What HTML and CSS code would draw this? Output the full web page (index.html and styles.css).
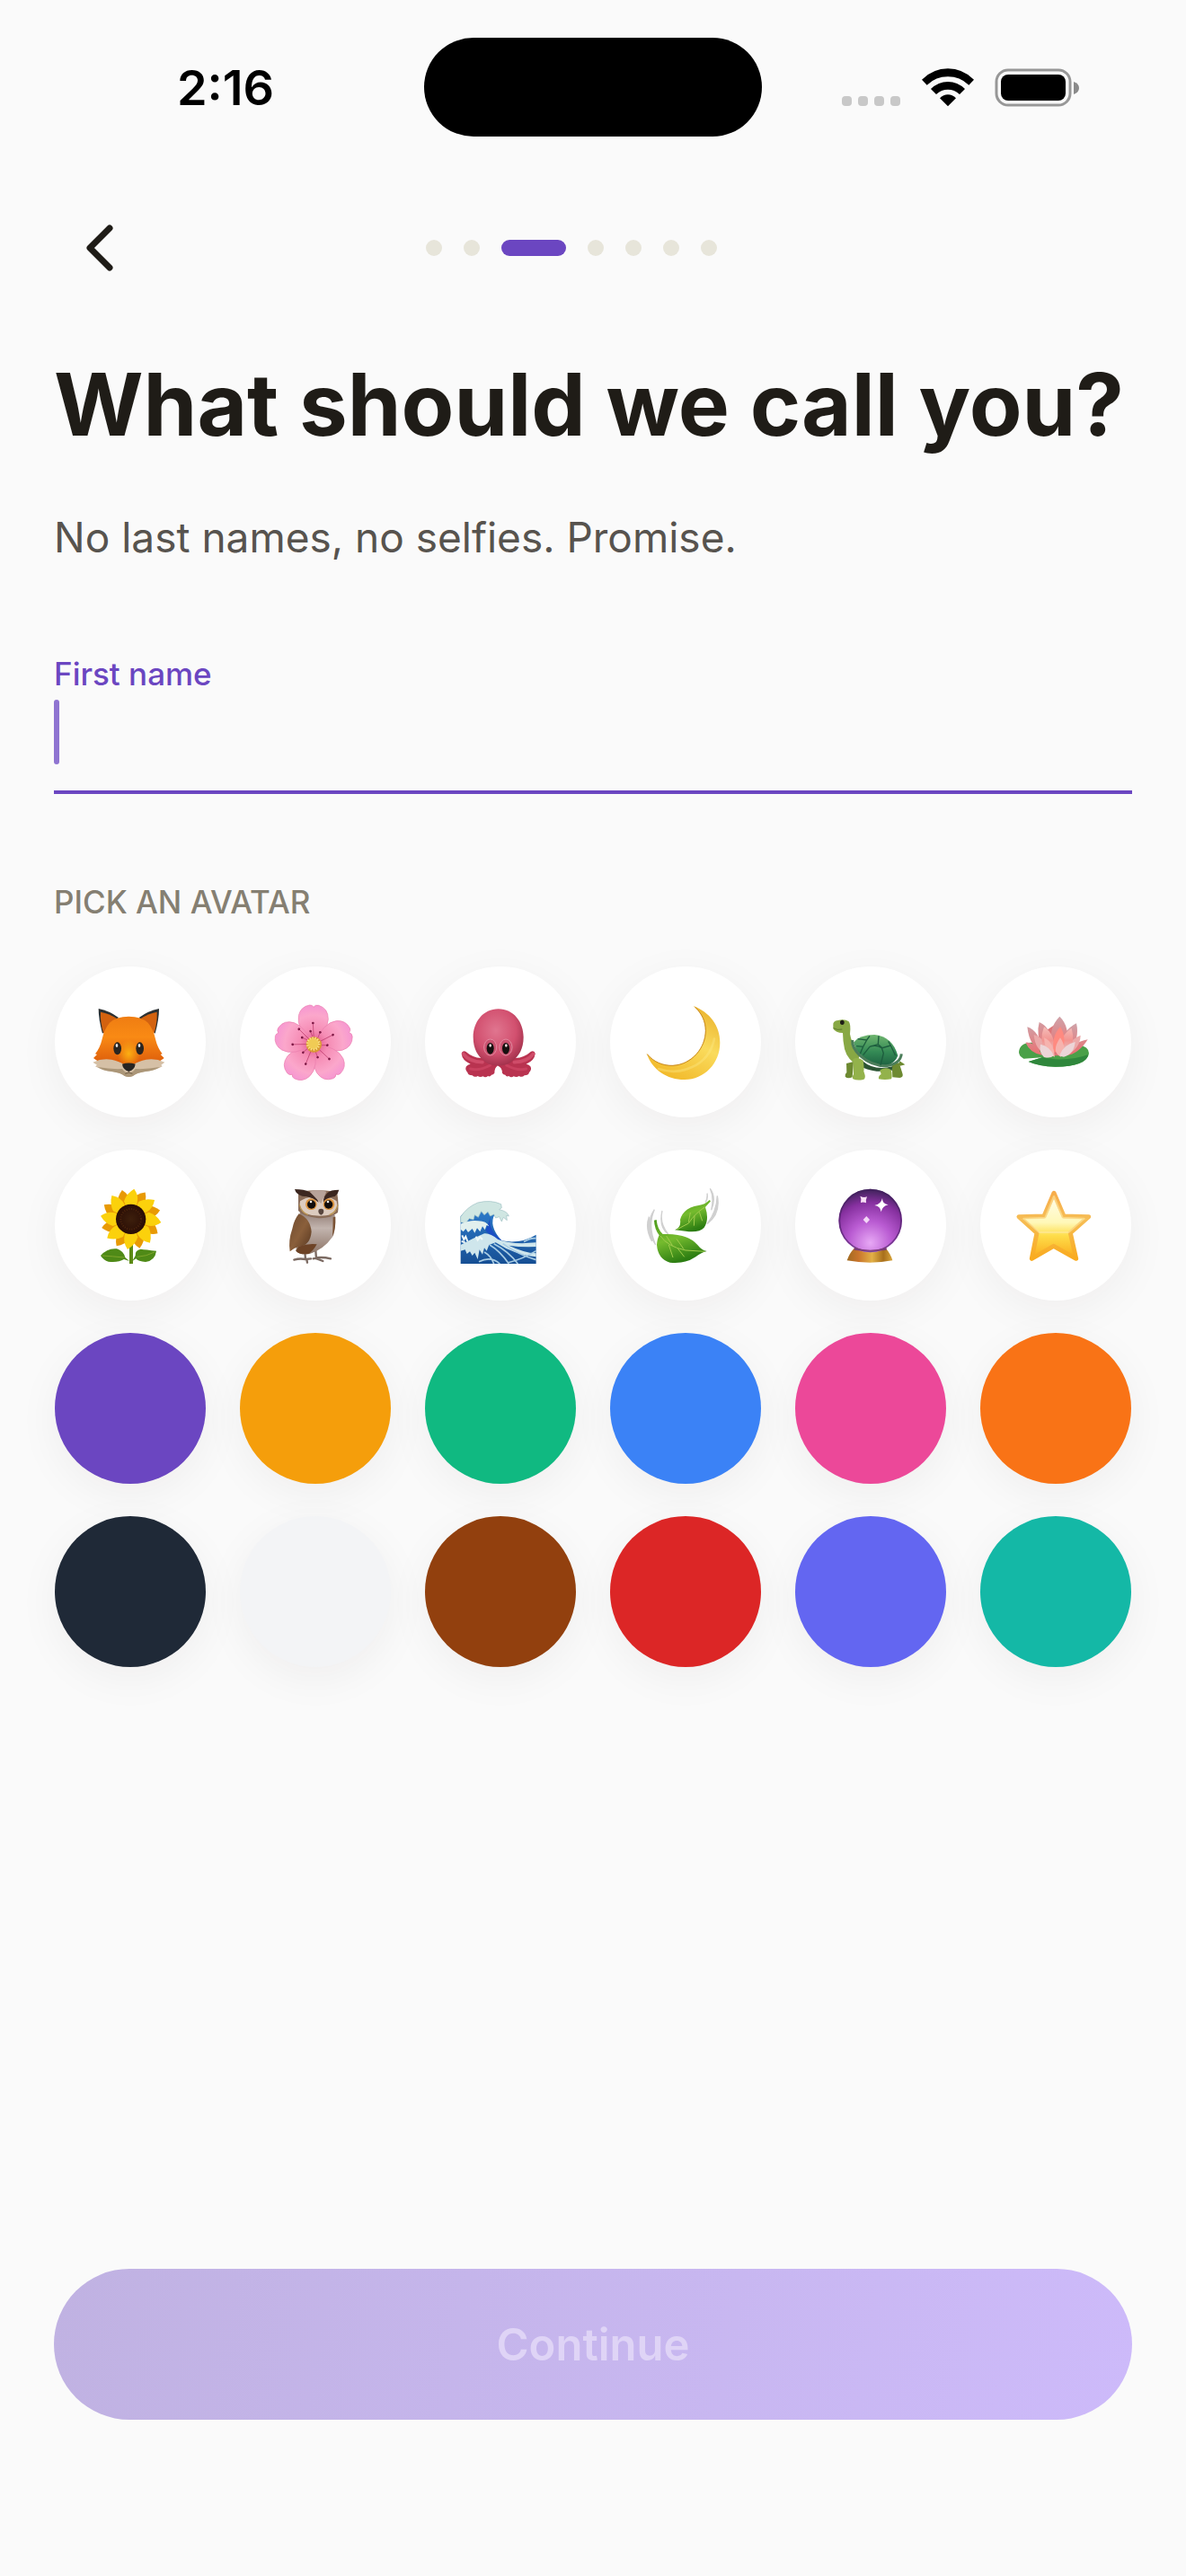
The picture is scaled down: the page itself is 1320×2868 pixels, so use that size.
FILE: index.html
```html
<!DOCTYPE html>
<html lang="en">
<head>
    <meta charset="UTF-8">
    <meta name="viewport" content="width=device-width, initial-scale=1.0">
    <title>What should we call you?</title>
    <link rel="stylesheet" href="styles.css">
</head>
<body>

<!-- Status bar -->
<div class="status-bar">
    <div class="time">2:16</div>
    <div class="island"></div>
    <div class="status-icons">
        <svg class="signal" viewBox="0 0 66 43">
            <rect x="0" y="31" width="11" height="11" rx="4"/>
            <rect x="18" y="31" width="11" height="11" rx="4"/>
            <rect x="36" y="31" width="11" height="11" rx="4"/>
            <rect x="54" y="31" width="11" height="11" rx="4"/>
        </svg>
        <svg class="wifi" viewBox="374 74 174 129">
            <path d="M374 112Q412 75 461 75Q510 75 548 112L531 130Q501 102 461 102Q421 102 391 130Z"/>
            <path d="M404 143Q429 119 461 119Q493 119 518 143L500 161Q483 145 461 145Q439 145 422 161Z"/>
            <path d="M434 174Q446 162 461 162Q476 162 488 174L461 201Z"/>
        </svg>
        <svg class="battery" viewBox="0 0 94 43">
            <rect x="2" y="2" width="82" height="39" rx="13" fill="none" stroke="#979797" stroke-width="3"/>
            <rect x="7" y="7" width="72" height="29" rx="8"/>
            <path d="M88 15Q94 17 94 22Q94 27 88 29Z" fill="#8a8a8a"/>
        </svg>
    </div>
</div>

<!-- Back button and progress dots -->
<header class="top-nav">
    <button type="button" class="back" aria-label="Back">
        <svg viewBox="0 0 32 52"><path d="M27 4L5 26L27 48"/></svg>
    </button>
    <div class="dots">
        <span class="dot"></span>
        <span class="dot"></span>
        <span class="dot active"></span>
        <span class="dot"></span>
        <span class="dot"></span>
        <span class="dot"></span>
        <span class="dot"></span>
    </div>
</header>

<main>
    <h1>What should we call you?</h1>
    <p class="subtitle">No last names, no selfies. Promise.</p>

    <div class="field">
        <label for="firstName">First name</label>
        <div class="input-row">
            <span class="caret"></span>
            <input type="text" id="firstName" autocomplete="off">
        </div>
    </div>

    <h2>PICK AN AVATAR</h2>
    <div class="avatars">
        <button type="button" class="avatar" aria-label="Fox">
            <svg viewBox="33 54 504 504">
                <defs>
                    <linearGradient id="foxFace" x1="0" y1="0" x2="0" y2="1">
                        <stop offset="0" stop-color="#ef7d12"/>
                        <stop offset="0.4" stop-color="#f98a14"/>
                        <stop offset="1" stop-color="#d9560a"/>
                    </linearGradient>
                    <radialGradient id="foxNose">
                        <stop offset="0" stop-color="#fcae12"/>
                        <stop offset="1" stop-color="#fcae12" stop-opacity="0"/>
                    </radialGradient>
                </defs>
                <path d="M179 195Q215 202 246 225L192 278Q179 230 179 195Z" fill="#2b3032"/>
                <path d="M381 195Q345 202 314 225L368 278Q381 230 381 195Z" fill="#2b3032"/>
                <path d="M186 206Q216 212 240 228L196 278Q184 240 186 206Z" fill="#d3620f"/>
                <path d="M374 206Q344 212 320 228L364 278Q376 240 374 206Z" fill="#d3620f"/>
                <path d="M280 221Q238 221 216 242Q198 262 190 300Q184 326 168 346L174 348L162 360Q200 392 280 392Q360 392 398 360L386 348L392 346Q376 326 370 300Q362 262 344 242Q322 221 280 221Z" fill="url(#foxFace)"/>
                <ellipse cx="280" cy="345" rx="38" ry="46" fill="url(#foxNose)"/>
                <path d="M160 374Q190 360 222 365Q248 371 262 380L298 380Q312 371 338 365Q370 360 400 374L388 383L392 388Q368 402 338 404Q304 410 294 420Q280 426 266 420Q256 410 222 404Q192 402 168 388L174 383Z" fill="#d5c0a6"/>
                <path d="M176 390Q222 398 258 396Q268 410 280 410Q292 410 302 396Q338 398 384 390Q362 404 336 405Q304 410 294 420Q280 426 266 420Q256 410 222 405Q196 403 176 390Z" fill="#ab9678"/>
                <ellipse cx="242" cy="328" rx="13" ry="21" fill="#2a2520"/>
                <ellipse cx="317" cy="328" rx="13" ry="21" fill="#2a2520"/>
                <ellipse cx="240" cy="318" rx="4" ry="6" fill="#e8e8e8"/>
                <ellipse cx="315" cy="318" rx="4" ry="6" fill="#e8e8e8"/>
                <path d="M258 380Q280 373 302 380Q300 398 280 405Q260 398 258 380Z" fill="#272422"/>
                <path d="M280 404V410M268 412Q280 404 292 412" fill="none" stroke="#6f5b43" stroke-width="3"/>
            </svg>
        </button>
        <button type="button" class="avatar" aria-label="Cherry blossom">
            <svg viewBox="651 54 504 504">
                <defs>
                    <radialGradient id="petal" gradientUnits="userSpaceOnUse" cx="898" cy="314" r="130">
                        <stop offset="0" stop-color="#dd4f86"/>
                        <stop offset="0.35" stop-color="#f58cb4"/>
                        <stop offset="0.75" stop-color="#fba7cb"/>
                        <stop offset="1" stop-color="#f697d2"/>
                    </radialGradient>
                    <path id="petalShape" d="M898 314Q838 262 847 218Q854 188 884 183Q893 182 897 190Q903 181 914 184Q946 194 946 230Q944 266 898 314Z"/>
                    <g id="stamen">
                        <path d="M898 300L895 243M908 300L919 274" stroke="#b83768" stroke-width="2"/>
                        <circle cx="895" cy="243" r="4" fill="#7b1743"/>
                        <circle cx="919" cy="274" r="4" fill="#7b1743"/>
                    </g>
                </defs>
                <g fill="url(#petal)" stroke="#ea7fae" stroke-width="2">
                    <use href="#petalShape"/>
                    <use href="#petalShape" transform="rotate(72 898 314)"/>
                    <use href="#petalShape" transform="rotate(144 898 314)"/>
                    <use href="#petalShape" transform="rotate(216 898 314)"/>
                    <use href="#petalShape" transform="rotate(288 898 314)"/>
                </g>
                <use href="#stamen"/>
                <use href="#stamen" transform="rotate(66 898 314)"/>
                <use href="#stamen" transform="rotate(136 898 314)"/>
                <use href="#stamen" transform="rotate(205 898 314)"/>
                <use href="#stamen" transform="rotate(272 898 314)"/>
                <use href="#stamen" transform="rotate(318 898 314)"/>
                <circle cx="898" cy="315" r="26" fill="#d99a34"/>
                <circle cx="896" cy="312" r="19" fill="#f0cb55"/>
                <circle cx="896" cy="312" r="20" fill="none" stroke="#fae38a" stroke-width="7" stroke-dasharray="4 5"/>
            </svg>
        </button>
        <button type="button" class="avatar" aria-label="Octopus">
            <svg viewBox="70 54 504 504">
                <defs>
                    <radialGradient id="octoHead" cx="0.45" cy="0.38" r="0.62">
                        <stop offset="0" stop-color="#e0758f"/>
                        <stop offset="0.65" stop-color="#d2506f"/>
                        <stop offset="1" stop-color="#a5334e"/>
                    </radialGradient>
                </defs>
                <path d="M192 345Q194 334 206 338Q228 358 258 360L300 372L312 386Q302 392 302 410Q298 416 292 416Q288 424 280 420Q272 427 264 421Q254 426 246 420Q236 426 228 418Q214 418 212 408Q202 398 208 388Q214 380 222 380Q194 368 192 345Z" fill="#b93350"/>
                <path d="M438 345Q436 334 424 338Q402 358 372 360L330 372L314 386Q328 392 328 410Q332 416 338 416Q342 424 350 420Q358 427 366 421Q376 426 384 420Q394 426 402 418Q416 418 418 408Q428 398 422 388Q416 380 408 380Q436 368 438 345Z" fill="#b93350"/>
                <path d="M198 346Q218 372 262 374M432 346Q412 372 368 374" fill="none" stroke="#cf4c69" stroke-width="11" stroke-linecap="round"/>
                <path d="M222 396Q250 404 288 384M408 396Q380 404 342 384" fill="none" stroke="#c9415f" stroke-width="9" stroke-linecap="round"/>
                <path d="M315 196C366 196 399 240 399 290C399 330 382 354 366 366Q352 384 315 386Q278 384 264 366C248 354 231 330 231 290C231 240 264 196 315 196Z" fill="url(#octoHead)"/>
                <ellipse cx="288" cy="324" rx="21" ry="27" fill="#c9526f" stroke="#e38aa0" stroke-width="3"/>
                <ellipse cx="340" cy="324" rx="21" ry="27" fill="#c9526f" stroke="#e38aa0" stroke-width="3"/>
                <ellipse cx="288" cy="328" rx="12" ry="19" fill="#16100f"/>
                <ellipse cx="340" cy="328" rx="12" ry="19" fill="#16100f"/>
                <ellipse cx="288" cy="318" rx="4" ry="5" fill="#f1dfe2"/>
                <ellipse cx="341" cy="318" rx="4" ry="5" fill="#f1dfe2"/>
            </svg>
        </button>
        <button type="button" class="avatar" aria-label="Crescent moon">
            <svg viewBox="688 54 504 504">
                <defs>
                    <linearGradient id="moon" x1="0.9" y1="0" x2="0.4" y2="1">
                        <stop offset="0" stop-color="#e9b02a"/>
                        <stop offset="0.5" stop-color="#fadb5c"/>
                        <stop offset="1" stop-color="#f2bb2d"/>
                    </linearGradient>
                </defs>
                <path d="M966 186C1020 206 1055 252 1055 308C1055 378 1002 432 936 432C878 432 828 398 810 344C832 372 864 385 898 384C962 380 1006 326 1006 268C1006 236 992 208 966 186Z" fill="url(#moon)"/>
                <path d="M812 347C834 374 866 386 898 385C962 381 1007 326 1007 268C1007 238 995 212 972 190" fill="none" stroke="#c98a23" stroke-width="3"/>
                <path d="M850 396C920 420 1016 390 1036 296" fill="none" stroke="#fde885" stroke-width="8" stroke-linecap="round" opacity="0.4"/>
            </svg>
        </button>
        <button type="button" class="avatar" aria-label="Turtle">
            <svg viewBox="75 54 504 504">
                <defs>
                    <linearGradient id="shell" x1="0" y1="0" x2="0" y2="1">
                        <stop offset="0" stop-color="#6fb56f"/>
                        <stop offset="0.55" stop-color="#348a55"/>
                        <stop offset="1" stop-color="#1d6141"/>
                    </linearGradient>
                </defs>
                <path d="M246 378L270 372L266 424Q250 430 242 422Q240 414 247 408ZM398 380L422 376L434 414Q436 424 424 426L400 424ZM424 370L442 382L420 388Z" fill="#6d8a31"/>
                <path d="M202 250Q200 236 218 234Q240 228 254 238Q262 248 258 280Q262 310 290 344L284 384Q250 366 240 330Q234 300 234 276Q210 276 202 262Z" fill="#88a844"/>
                <path d="M203 260Q215 268 232 264" fill="none" stroke="#5d7a2c" stroke-width="3"/>
                <ellipse cx="232" cy="241" rx="7" ry="8" fill="#1d1d16"/>
                <path d="M300 370Q340 404 400 388L398 402Q340 410 302 392Z" fill="#2c5434"/>
                <path d="M268 364Q286 354 302 368Q306 392 304 404Q314 430 302 432Q282 436 268 430Q264 424 270 414Z" fill="#93b24b"/>
                <path d="M358 400Q380 388 396 400Q400 424 396 430Q374 434 354 430Q352 420 362 414Z" fill="#93b24b"/>
                <path d="M270 308Q290 282 340 282Q400 288 418 352Q410 376 380 386Q320 388 278 330Z" fill="url(#shell)"/>
                <path d="M266 300Q264 326 292 352Q330 386 378 386Q426 380 430 346" fill="none" stroke="#4b7d5a" stroke-width="9"/>
                <path d="M284 296L314 300L324 286M314 300L302 322L280 320M302 322L292 346M324 322Q345 314 364 326L370 344L360 384M324 322L302 350M354 286L352 314L366 326L394 318M352 314L324 322M394 318L386 304M394 318L410 352" fill="none" stroke="#1d5d3e" stroke-width="4"/>
            </svg>
        </button>
        <button type="button" class="avatar" aria-label="Lotus">
            <svg viewBox="693 54 504 504">
                <defs>
                    <linearGradient id="lotusBack" x1="0" y1="0" x2="0" y2="1">
                        <stop offset="0" stop-color="#cfa3a9"/>
                        <stop offset="1" stop-color="#ea6f70"/>
                    </linearGradient>
                    <linearGradient id="lotusFront" x1="0" y1="0" x2="0" y2="1">
                        <stop offset="0" stop-color="#f5bdb9"/>
                        <stop offset="0.5" stop-color="#f29490"/>
                        <stop offset="1" stop-color="#e6c6c8"/>
                    </linearGradient>
                </defs>
                <path d="M822 340Q824 310 862 308L1020 316Q1056 322 1056 344Q1050 388 944 389Q888 388 854 372L900 358L838 362Q822 354 822 340Z" fill="#4aa048"/>
                <path d="M854 372L900 358L944 364Q1010 366 1054 348Q1046 388 944 389Q888 388 854 372Z" fill="#2f873c"/>
                <path d="M886 330L910 270L940 250L980 262L1000 330L960 352H920Z" fill="#dd7678"/>
                <path d="M850 256Q890 268 904 340Q858 326 850 256ZM844 308Q876 304 900 350Q860 344 844 308ZM1014 244Q1026 296 990 338L956 330Q966 268 1014 244ZM1052 298Q1022 346 980 352Q1000 308 1052 298Z" fill="url(#lotusBack)"/>
                <path d="M890 240Q930 256 938 330L902 340Q878 280 890 240ZM958 221Q996 258 978 320H934Q918 262 958 221Z" fill="url(#lotusBack)"/>
                <path d="M1028 284Q1026 332 978 350Q980 304 1028 284ZM872 282Q914 294 922 350Q876 338 872 282Z" fill="#eba9a9"/>
                <path d="M906 256Q944 280 942 340L912 346Q888 300 906 256ZM998 260Q1012 308 984 346L956 336Q960 284 998 260Z" fill="url(#lotusFront)"/>
                <path d="M960 256Q982 286 968 340H938Q930 288 960 256Z" fill="#ff8a80"/>
                <path d="M906 292Q936 304 942 356Q910 348 906 292ZM960 292Q986 330 962 356Q928 340 960 292Z" fill="#f6b3ae"/>
                <path d="M894 314Q928 322 938 352Q928 362 906 357Q888 340 894 314ZM1010 306Q1006 348 972 356Q960 354 958 350Q970 316 1010 306Z" fill="#ecd5d7"/>
            </svg>
        </button>

        <button type="button" class="avatar" aria-label="Sunflower">
            <svg viewBox="33 666 504 504">
                <defs>
                    <radialGradient id="seeds">
                        <stop offset="0" stop-color="#3d1f0c"/>
                        <stop offset="1" stop-color="#2a0d05"/>
                    </radialGradient>
                    <g id="rays">
                        <path id="ray" d="M287 898L264 838Q272 812 298 797Q314 820 308 844Z"/>
                        <use href="#ray" transform="rotate(45 287 898)"/>
                        <use href="#ray" transform="rotate(90 287 898)"/>
                        <use href="#ray" transform="rotate(135 287 898)"/>
                        <use href="#ray" transform="rotate(180 287 898)"/>
                        <use href="#ray" transform="rotate(225 287 898)"/>
                        <use href="#ray" transform="rotate(270 287 898)"/>
                        <use href="#ray" transform="rotate(315 287 898)"/>
                    </g>
                </defs>
                <path d="M282 980H294V1047H282Z" fill="#5c8a14"/>
                <path d="M186 1020Q208 994 240 997Q262 1004 268 1026L282 1038L264 1032Q244 1044 212 1040Q196 1036 186 1020ZM372 1004Q368 1036 336 1041Q312 1040 304 1030L292 1038L302 1020Q300 1002 320 998Q336 1000 372 1004Z" fill="#4f8a17"/>
                <path d="M192 1020Q224 1022 264 1026M308 1024Q340 1022 366 1008" fill="none" stroke="#7fa62c" stroke-width="3"/>
                <use href="#rays" fill="#e89a05" transform="rotate(22 287 898)"/>
                <use href="#rays" fill="#fbd10c"/>
                <circle cx="287" cy="898" r="50" fill="url(#seeds)"/>
                <circle cx="287" cy="898" r="34" fill="none" stroke="#4d260e" stroke-width="6" stroke-dasharray="3 5"/>
            </svg>
        </button>
        <button type="button" class="avatar" aria-label="Owl">
            <svg viewBox="651 666 504 504">
                <defs>
                    <linearGradient id="owlBelly" x1="0" y1="0" x2="0" y2="1">
                        <stop offset="0" stop-color="#8d7870"/>
                        <stop offset="0.4" stop-color="#c2b4ae"/>
                        <stop offset="1" stop-color="#8c7466"/>
                    </linearGradient>
                    <linearGradient id="owlWing" x1="0" y1="0" x2="1" y2="1">
                        <stop offset="0" stop-color="#6f4b30"/>
                        <stop offset="0.5" stop-color="#8a5f3b"/>
                        <stop offset="1" stop-color="#54351f"/>
                    </linearGradient>
                </defs>
                <path d="M868 1008L870 1032M904 1004L906 1030M832 1034Q850 1028 870 1032L888 1030M874 1032L876 1043M896 1030Q920 1022 954 1030M908 1030L928 1038" fill="none" stroke="#7b6a62" stroke-width="7" stroke-linecap="round"/>
                <path d="M852 870Q908 900 968 884Q972 940 960 958Q930 1000 884 1014Q850 1018 838 1004Z" fill="url(#owlBelly)"/>
                <path d="M848 880Q886 896 890 940Q886 988 846 990Q828 996 818 1006Q812 970 826 930Q832 900 848 880Z" fill="url(#owlWing)"/>
                <path d="M846 990Q880 978 908 982Q896 1004 880 1014Q850 1018 838 1004Z" fill="#6d4326"/>
                <path d="M970 890Q972 930 960 956Q962 920 962 892Z" fill="#7a5234"/>
                <path d="M846 812Q870 800 910 802Q950 800 976 812Q982 850 978 876Q950 898 908 894Q862 888 846 870Z" fill="#8a6c58"/>
                <path d="M852 838Q880 818 912 828Q950 818 974 838Q982 866 960 882Q910 894 866 878Q846 862 852 838Z" fill="#dccbbf"/>
                <path d="M850 850Q856 874 878 884M978 850Q972 876 950 884" fill="none" stroke="#ba9450" stroke-width="4"/>
                <path d="M834 798Q866 798 884 808Q906 818 914 842Q894 826 872 822Q852 824 838 808ZM982 800Q952 800 944 810Q928 824 930 842Q944 824 968 822Q980 812 982 800Z" fill="#3c2720"/>
                <path d="M884 806Q910 798 940 806L922 846Z" fill="#b8a399"/>
                <circle cx="889" cy="848" r="19" fill="#dc9440"/>
                <circle cx="948" cy="848" r="19" fill="#dc9440"/>
                <circle cx="890" cy="849" r="14" fill="#120d0c"/>
                <circle cx="947" cy="849" r="14" fill="#120d0c"/>
                <circle cx="888" cy="840" r="4" fill="#fff"/>
                <circle cx="945" cy="840" r="4" fill="#fff"/>
                <path d="M914 866Q922 860 930 866Q934 878 922 884Q910 878 914 866Z" fill="#57453e"/>
            </svg>
        </button>
        <button type="button" class="avatar" aria-label="Wave">
            <svg viewBox="70 666 504 504">
                <defs>
                    <linearGradient id="sea" x1="0" y1="0" x2="0" y2="1">
                        <stop offset="0" stop-color="#2f7fd0"/>
                        <stop offset="1" stop-color="#164f94"/>
                    </linearGradient>
                </defs>
                <path d="M189 888Q230 840 290 850L304 880Q280 920 326 970Q390 982 441 950V1047H189Z" fill="url(#sea)"/>
                <path d="M290 890Q276 930 330 972Q300 970 272 936Z" fill="#1b4fc4"/>
                <path d="M189 890Q210 858 246 843Q290 832 324 848L326 860L318 866Q346 872 350 888L342 886L344 902L332 892L326 906L318 890L306 894L300 882L288 888L280 874L268 884L258 872L248 892L236 884L232 900L218 896L206 912L189 908Z" fill="#cfe6e2" stroke="#9dc0c2" stroke-width="2"/>
                <path d="M189 914Q220 900 248 904Q276 904 284 922L276 918L270 934L262 922L254 940L244 928L236 944L228 930L214 942L206 930L198 940L189 932Z" fill="#e2f0ee"/>
                <path d="M189 984Q230 962 268 946Q288 944 314 966Q360 984 441 976V990Q390 992 350 986Q400 1010 441 1012V1024Q370 1018 306 976L284 984L276 1004L268 994L262 1016L252 1000L246 1032L236 1010L228 1020L220 1006L210 1014L204 1000L189 1004Z" fill="#cfe6ec"/>
                <path d="M240 956L246 968L254 958L262 966M194 952L200 966L206 956L212 972M192 972L204 976" fill="none" stroke="#f0f8f8" stroke-width="6"/>
                <path d="M286 984Q320 1004 350 1047M300 980Q350 1006 380 1047M268 1008Q290 1020 300 1047M330 980Q380 1016 441 1034M346 1044Q400 1030 441 1004M250 1040Q290 1020 320 1047M400 974Q420 960 441 962" fill="none" stroke="#a9cde4" stroke-width="5"/>
            </svg>
        </button>
        <button type="button" class="avatar" aria-label="Leaves">
            <svg viewBox="688 666 504 504">
                <defs>
                    <linearGradient id="leaf" x1="0" y1="0" x2="0.4" y2="1">
                        <stop offset="0" stop-color="#4c9a1c"/>
                        <stop offset="0.5" stop-color="#75bb2e"/>
                        <stop offset="1" stop-color="#2c7d12"/>
                    </linearGradient>
                </defs>
                <path d="M1022 796Q1044 826 1026 868Q1036 826 1022 796ZM1046 820Q1058 880 1012 914Q1044 874 1046 820ZM1012 812Q1014 830 1006 842Q1016 830 1012 812ZM836 866Q800 920 840 984Q812 920 836 866ZM862 870Q852 912 882 948Q850 926 862 870ZM818 890Q804 930 828 972Q814 930 818 890Z" fill="#d0d0d0" stroke="#d0d0d0" stroke-width="4"/>
                <path d="M904 934Q926 926 922 900Q932 860 984 852Q1004 850 1020 834L1024 838L1006 858Q1020 900 1002 926Q986 944 940 938Z" fill="url(#leaf)"/>
                <path d="M835 902L843 900Q846 932 864 948Q946 944 980 984Q994 1002 1011 1005Q990 1010 974 1024Q940 1048 888 1043Q848 1032 844 984Q846 962 852 952Q836 930 835 902Z" fill="url(#leaf)"/>
                <path d="M1004 858Q970 880 950 912L912 932M970 886L968 920M986 874L996 904M956 876L950 908M856 954Q880 990 940 1002L1004 1006M884 984L898 1026M914 996L936 1024M876 954L896 986M910 964L934 998" fill="none" stroke="#a1cc4e" stroke-width="3"/>
            </svg>
        </button>
        <button type="button" class="avatar" aria-label="Crystal ball">
            <svg viewBox="75 666 504 504">
                <defs>
                    <radialGradient id="orb" cx="0.5" cy="0.85" r="0.85">
                        <stop offset="0" stop-color="#e7a8f5"/>
                        <stop offset="0.4" stop-color="#b95bd2"/>
                        <stop offset="0.75" stop-color="#86309f"/>
                        <stop offset="1" stop-color="#3d2258"/>
                    </radialGradient>
                    <linearGradient id="stand">
                        <stop offset="0" stop-color="#a06a20"/>
                        <stop offset="0.25" stop-color="#c9742c"/>
                        <stop offset="0.55" stop-color="#e2b047"/>
                        <stop offset="0.8" stop-color="#a86f1c"/>
                        <stop offset="1" stop-color="#d8a53a"/>
                    </linearGradient>
                </defs>
                <path d="M272 996H378Q394 1014 400 1036Q326 1050 248 1036Q256 1012 272 996Z" fill="url(#stand)"/>
                <circle cx="326" cy="903" r="106" fill="url(#orb)"/>
                <circle cx="326" cy="903" r="103" fill="none" stroke="#43205f" stroke-width="5" opacity="0.6"/>
                <path d="M272 992Q326 1010 380 992V1001Q326 1008 272 1001Z" fill="#7a3b78"/>
                <path d="M366 828Q366 848 386 850Q366 854 362 874Q360 854 340 852Q362 848 366 828Z" fill="#fff"/>
                <path d="M292 821Q304 828 315 823Q310 834 312 844Q302 840 294 843Q298 832 292 821Z" fill="#f9dff6"/>
                <path d="M313 888L324 900L313 912L302 900Z" fill="#f3d7f6"/>
            </svg>
        </button>
        <button type="button" class="avatar" aria-label="Star">
            <svg viewBox="693 666 504 504">
                <defs>
                    <linearGradient id="star" x1="0" y1="0" x2="0" y2="1">
                        <stop offset="0" stop-color="#fffdf0"/>
                        <stop offset="0.45" stop-color="#fff8b8"/>
                        <stop offset="0.65" stop-color="#fedd4a"/>
                        <stop offset="1" stop-color="#faa91a"/>
                    </linearGradient>
                    <linearGradient id="starEdge" x1="0" y1="0" x2="0" y2="1">
                        <stop offset="0" stop-color="#f7ac4a"/>
                        <stop offset="0.4" stop-color="#f6bd55"/>
                        <stop offset="1" stop-color="#f9ab1f"/>
                    </linearGradient>
                </defs>
                <path d="M939 811L972 888L1055 890L994 944L1013 1030L938 988L865 1030L882 944L822 890L906 888Z" fill="url(#star)" stroke="url(#starEdge)" stroke-width="15" stroke-linejoin="round"/>
                <path d="M939 822L968 893L1040 896L988 942L890 942L838 896L910 893Z" fill="none" stroke="#fde7a0" stroke-width="6" stroke-linejoin="round" opacity="0.6"/>
            </svg>
        </button>

        <button type="button" class="avatar purple" aria-label="Purple"></button>
        <button type="button" class="avatar amber" aria-label="Amber"></button>
        <button type="button" class="avatar green" aria-label="Green"></button>
        <button type="button" class="avatar blue" aria-label="Blue"></button>
        <button type="button" class="avatar pink" aria-label="Pink"></button>
        <button type="button" class="avatar orange" aria-label="Orange"></button>
        <button type="button" class="avatar navy" aria-label="Navy"></button>
        <button type="button" class="avatar light" aria-label="Light gray"></button>
        <button type="button" class="avatar brown" aria-label="Brown"></button>
        <button type="button" class="avatar red" aria-label="Red"></button>
        <button type="button" class="avatar indigo" aria-label="Indigo"></button>
        <button type="button" class="avatar teal" aria-label="Teal"></button>
    </div>
</main>

<footer>
    <button type="button" class="continue" disabled>Continue</button>
</footer>

</body>
</html>
```
FILE: styles.css
```css
* {
    box-sizing: border-box;
}
body {
    display: flex;
    flex-direction: column;
    min-height: 100vh;
    margin: 0;
    background-color: #fafafa;
    color: #1f1c17;
    font-family: Inter, "Liberation Sans", sans-serif;
}
button {
    padding: 0;
    border: none;
    background: none;
    font-family: inherit;
    cursor: pointer;
}

/* Status bar */
.status-bar {
    display: grid;
    grid-template-columns: 1fr 376px 1fr;
    align-items: center;
    padding-top: 42px;
}
.time {
    padding-left: 30px;
    color: #000;
    font-size: 54px;
    font-weight: 600;
    text-align: center;
}
.island {
    height: 110px;
    border-radius: 55px;
    background-color: #000;
}
.status-icons {
    display: flex;
    justify-content: center;
    gap: 23px;
    padding-right: 30px;
}
.status-icons svg {
    height: 43px;
}
.signal {
    width: 66px;
    fill: #c8c8c8;
}
.wifi {
    width: 58px;
}
.battery {
    width: 94px;
}

/* Top navigation */
.top-nav {
    display: flex;
    align-items: center;
    height: 132px;
    margin-top: 58px;
    padding: 0 210px 0 60px;
}
.back {
    display: flex;
    align-items: center;
    justify-content: center;
    width: 102px;
    height: 102px;
}
.back svg {
    width: 32px;
    height: 52px;
    fill: none;
    stroke: #1f1c17;
    stroke-width: 7;
    stroke-linecap: round;
    stroke-linejoin: round;
}
.dots {
    display: flex;
    flex: 1;
    justify-content: center;
    gap: 24px;
}
.dot {
    width: 18px;
    height: 18px;
    border-radius: 9px;
    background-color: #e7e5da;
}
.dot.active {
    width: 72px;
    background-color: #6b46c1;
}

/* Page content */
main {
    flex: 1;
    padding: 48px 60px 0;
}
h1 {
    margin: 0;
    font-size: 96px;
    font-weight: 700;
    line-height: 120px;
}
.subtitle {
    margin: 48px 0 0;
    color: #57534e;
    font-size: 46px;
    line-height: 80px;
}
.field {
    margin-top: 88px;
    border-bottom: 4px solid #6b46c1;
}
.field label {
    display: block;
    color: #6b46c1;
    font-size: 35px;
    font-weight: 500;
    line-height: 48px;
}
.input-row {
    display: flex;
    align-items: center;
    height: 106px;
    padding-bottom: 24px;
}
.caret {
    width: 6px;
    height: 72px;
    border-radius: 3px;
    background-color: #8f74d1;
}
.input-row input {
    flex: 1;
    min-width: 0;
    height: 72px;
    padding: 0;
    border: none;
    outline: none;
    background: none;
    color: inherit;
    font-family: inherit;
    font-size: 46px;
}
h2 {
    margin: 96px 0 48px;
    color: #857f72;
    font-size: 35px;
    font-weight: 500;
    line-height: 48px;
}
.avatars {
    display: grid;
    grid-template-columns: repeat(6, 1fr);
    justify-items: center;
    gap: 36px;
}
.avatar {
    width: 168px;
    height: 168px;
    border-radius: 50%;
    background-color: #fff;
    box-shadow: 0 12px 48px rgba(31, 28, 23, 0.05);
}
.avatar svg {
    display: block;
    width: 100%;
    height: 100%;
}
.purple { background-color: #6b46c1; }
.amber { background-color: #f59e0b; }
.green { background-color: #10b981; }
.blue { background-color: #3b82f6; }
.pink { background-color: #ec4899; }
.orange { background-color: #f97316; }
.navy { background-color: #1f2937; }
.light { background-color: #f3f4f6; }
.brown { background-color: #92400e; }
.red { background-color: #dc2626; }
.indigo { background-color: #6366f1; }
.teal { background-color: #14b8a6; }

/* Bottom action */
footer {
    padding: 48px 60px 174px;
}
.continue {
    width: 100%;
    height: 168px;
    border-radius: 84px;
    background: linear-gradient(100deg, #c0b2e2, #cdbafa);
    color: #dfd4f6;
    font-size: 49px;
    font-weight: 600;
    cursor: default;
}
```
